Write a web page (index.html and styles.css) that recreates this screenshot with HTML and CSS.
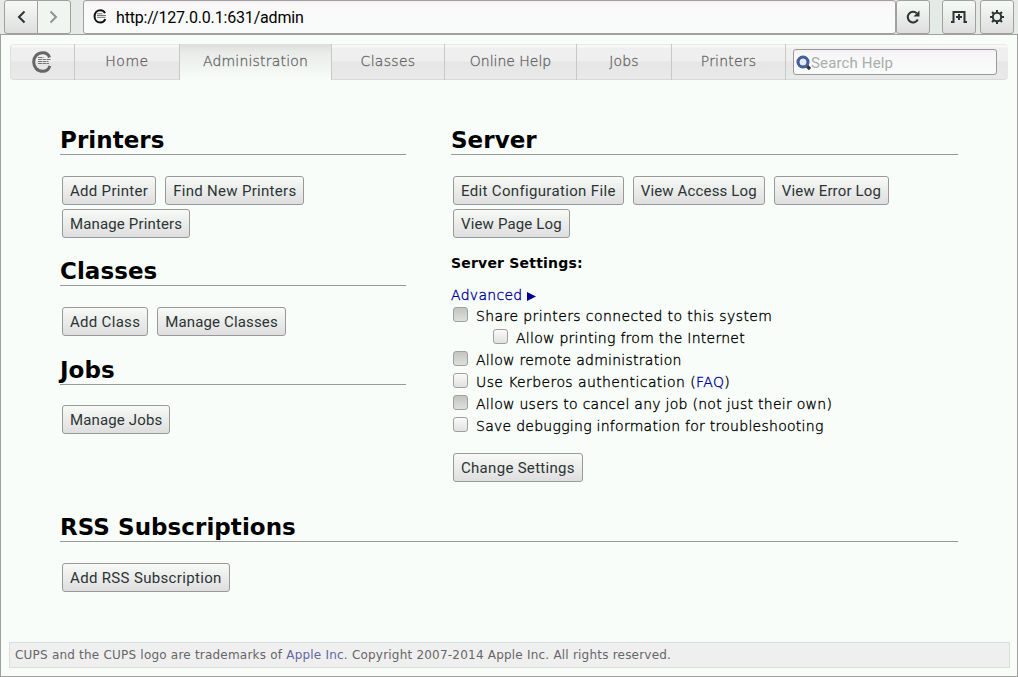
FILE: index.html
```html
<!DOCTYPE html>
<html lang="en">
<head>
    <meta charset="utf-8">
    <title>Administration - CUPS</title>
    <link rel="stylesheet" href="styles.css">
</head>
<body>
    <div class="toolbar">
        <button class="tool back" title="Back"><svg width="16" height="16" viewBox="0 0 16 16"><path d="M11.500 2.500L6 8l5.500 5.500" /></svg></button>
        <button class="tool forward" title="Forward"><svg width="16" height="16" viewBox="0 0 16 16"><path d="M4.500 2.500L10 8l-5.500 5.500" /></svg></button>
        <div class="address">
            <svg class="favicon" width="14" height="15" viewBox="0 0 14 15"><path d="M12 4.200C11 1.900 9.500 1.200 7.500 1.200 4 1.200 1.600 3.900 1.600 7.500s2.400 6.100 5.900 6.100c2.100 0 3.800-1 4.800-3.400" fill="none" stroke="#111" stroke-width="2" /><path d="M4 4.800h5.500M4 6.500h9M4 8.300h8.500" stroke="#777" stroke-width="1" /></svg>
            <span class="url">http://127.0.0.1:631/admin</span>
        </div>
        <button class="tool reload" title="Reload"><svg width="16" height="16" viewBox="0 0 16 16"><path d="M12.800 10.500A5.300 5.300 0 1 1 11.700 4.200" /><path class="solid" d="M14.500 1.500v6H8.500z" /></svg></button>
        <button class="tool newtab" title="New tab"><svg width="18" height="16" viewBox="0 0 18 16"><path d="M1 13h2.500V3h11v10H17M9 5v6M6 8h6" /></svg></button>
        <button class="tool gear" title="Menu"><svg width="16" height="16" viewBox="0 0 16 16"><circle cx="8" cy="8" r="4.200" /><path d="M8 1v2.500M8 12.500V15M1 8h2.500M12.500 8H15M3 3l1.800 1.800M11.200 11.200L13 13M3 13l1.800-1.800M11.200 4.800L13 3" /></svg></button>
    </div>

    <div class="page">
        <div class="nav">
            <a class="tab logo"><svg width="20" height="22" viewBox="0 0 20 22"><path d="M17.500 6.500C16.500 3 14 1.700 10.800 1.700 5.400 1.700 1.700 5.800 1.700 11s3.700 9.300 9.100 9.300c3.200 0 6-1.700 7-5.500" fill="none" stroke="#666" stroke-width="3" /><path d="M6 6.500h5.500M6 8.500h12.500M6 10.500h10.500M6 12.500h11" stroke="#777" stroke-width="1.200" stroke-dasharray="4 .5" /></svg></a>
            <a class="tab home">Home</a>
            <a class="tab admin active">Administration</a>
            <a class="tab classes">Classes</a>
            <a class="tab help">Online Help</a>
            <a class="tab jobs">Jobs</a>
            <a class="tab printers">Printers</a>
            <div class="search">
                <svg width="15" height="16" viewBox="0 0 15 16"><path d="M10.500 10.500l3.500 3.500" stroke="#333" stroke-width="3.200" /><circle cx="7" cy="7" r="5" fill="#e4eaf5" stroke="#35508f" stroke-width="3" /><circle cx="7" cy="7" r="5.300" fill="none" stroke="#6482b9" stroke-width=".6" /></svg>
                <span>Search Help</span>
            </div>
        </div>

        <div class="content">
            <div class="left">
                <h2>Printers</h2>
                <div class="buttons"><button class="wide">Add Printer</button><button class="wide">Find New Printers</button><button>Manage Printers</button></div>
                <h2>Classes</h2>
                <div class="buttons"><button class="wide">Add Class</button><button>Manage Classes</button></div>
                <h2 class="jobs-title">Jobs</h2>
                <div class="buttons"><button>Manage Jobs</button></div>
            </div>
            <div class="right">
                <h2>Server</h2>
                <div class="buttons"><button class="wider">Edit Configuration File</button><button>View Access Log</button><button>View Error Log</button><button>View Page Log</button></div>
                <p class="settings-title">Server Settings:</p>
                <div class="advanced"><a>Advanced <svg width="9" height="9" viewBox="0 0 9 9"><path d="M0 0l9 4.500-9 4.500z" fill="#009" /></svg></a></div>
                <label class="check"><i class="box on"></i><span class="wider">Share printers connected to this system</span></label>
                <label class="check indent"><i class="box"></i><span>Allow printing from the Internet</span></label>
                <label class="check"><i class="box on"></i><span>Allow remote administration</span></label>
                <label class="check"><i class="box"></i><span class="wider">Use Kerberos authentication (<a>FAQ</a>)</span></label>
                <label class="check"><i class="box on"></i><span>Allow users to cancel any job (not just their own)</span></label>
                <label class="check"><i class="box"></i><span>Save debugging information for troubleshooting</span></label>
                <div class="buttons change"><button class="wide">Change Settings</button></div>
            </div>
            <div class="rss">
                <h2>RSS Subscriptions</h2>
                <div class="buttons"><button class="wider">Add RSS Subscription</button></div>
            </div>
        </div>

        <div class="footer">CUPS and the CUPS logo are trademarks of <a>Apple Inc</a>. Copyright 2007-2014 Apple Inc. All rights reserved.</div>
    </div>
</body>
</html>
```
FILE: styles.css
```css
* {
    box-sizing: border-box;
}

body {
    margin: 0;
    height: 677px;
    display: flex;
    flex-direction: column;
    overflow: hidden;
    background: #e6eae6;
    color: #000;
    font-family: "DejaVu Sans", sans-serif;
    font-size: 14px;
}

/* browser toolbar */
.toolbar {
    display: flex;
    height: 34px;
    padding-left: 4px;
}

.tool {
    display: flex;
    align-items: center;
    justify-content: center;
    width: 34px;
    height: 34px;
    margin: 0;
    padding: 0;
    border: 1px solid #a0a0a0;
    border-radius: 3px;
    background: linear-gradient(#f6faf6, #dedede);
}

.tool path,
.tool circle {
    fill: none;
    stroke: #2a3434;
    stroke-width: 2;
}

.tool .solid {
    fill: #2a3434;
    stroke: none;
}

.back {
    border-radius: 3px 0 0 3px;
}

.forward {
    margin-left: -1px;
    border-radius: 0 3px 3px 0;
    background: #f0f5f0;
}

.forward path {
    stroke: #8a9696;
}

.address {
    display: flex;
    align-items: center;
    width: 813px;
    margin-left: 12px;
    padding-left: 9px;
    border: 1px solid #a0a0a0;
    border-radius: 3px;
    background: linear-gradient(#f4eff1, #faf8fa 3px, #f8fcf9);
}

.favicon {
    margin-top: -1px;
}

.url {
    margin-left: 9px;
    font: 16px Roboto, sans-serif;
    letter-spacing: -.17px;
}

.newtab {
    margin-left: 12px;
}

.gear {
    margin-left: 4px;
}

.page {
    display: flex;
    flex-direction: column;
    height: 643px;
    padding: 9px 7px 8px 8px;
    border: 1px solid #a0a0a0;
    background: #f8fdf9;
}

/* CUPS menu bar */
.nav {
    display: flex;
    height: 36px;
    width: 998px;
    margin-left: 1px;
    border: 1px solid #d8dcd8;
    border-top-color: #e8ebe8;
    border-width: 1px 0;
    border-left: 1px solid #dde0dd;
    border-radius: 4px;
    background: linear-gradient(#f8f8f8 0, #f8f8f8 2px, #efefef 3px, #efefef 16px, #e6e6e6 17px, #e9e9e9);
}

.tab {
    height: 36px;
    margin-top: -1px;
    padding-top: 8px;
    border-right: 1px solid #c6cac6;
    color: #666;
    font-size: 14px;
    font-weight: 200;
    -webkit-text-stroke: .3px;
    letter-spacing: .2px;
    line-height: 18px;
    text-align: center;
    white-space: nowrap;
}

.logo {
    width: 64px;
    padding: 7px 2px 0 0;
}

.home {
    width: 105px;
    letter-spacing: .5px;
}

.admin {
    width: 152px;
}

.classes {
    width: 113px;
    letter-spacing: .3px;
}

.help {
    width: 132px;
    letter-spacing: 0;
}

.jobs {
    width: 95px;
}

.printers {
    width: 114px;
}

.active {
    background: linear-gradient(#dcdedc, #e9ebe9 8px, #f8fdf9);
}

.search {
    display: flex;
    align-items: center;
    width: 204px;
    height: 26px;
    margin: 4px 0 0 7px;
    padding: 1px 0 0 2px;
    border: 1px solid #999;
    border-radius: 3px;
    background: linear-gradient(#f3edf0, #f8f6f8 4px, #f8fcf9);
    color: #a9aeaa;
    font: 15px Roboto, sans-serif;
    letter-spacing: .15px;
}

/* admin page */
.content {
    display: grid;
    grid-template-columns: 346px 507px;
    column-gap: 45px;
    margin: 46px 0 0 51px;
}

.rss {
    grid-column: 1 / 3;
    margin-top: 29px;
}

h2 {
    height: 29px;
    margin: 0 0 19px;
    border-bottom: 1px solid #999;
    font-size: 23px;
    letter-spacing: .05px;
    line-height: 28px;
    white-space: nowrap;
}

.jobs-title {
    margin: 18px 0;
}

.buttons {
    display: flex;
    flex-wrap: wrap;
    margin-bottom: 17px;
}

.buttons button {
    height: 29px;
    margin: 2px 7px 2px 2px;
    padding: 0 7px;
    border: 1px solid #999;
    border-radius: 3px;
    background: linear-gradient(#f7faf7, #dedede);
    color: #2c3434;
    font: 15px Roboto, sans-serif;
    letter-spacing: .15px;
    white-space: nowrap;
}

.buttons .wide {
    letter-spacing: .3px;
}

.buttons .wider {
    letter-spacing: .34px;
}

.right .buttons {
    margin-bottom: 14px;
}

.settings-title {
    margin: 0 0 14px;
    font-weight: bold;
    letter-spacing: .2px;
    line-height: 18px;
}

.advanced {
    height: 19px;
    font-weight: 200;
    -webkit-text-stroke: .35px;
    letter-spacing: .3px;
    line-height: 18px;
}

.advanced svg {
    vertical-align: -1px;
}

.right a {
    color: #009;
}

.check {
    display: flex;
    align-items: center;
    height: 22px;
    padding-left: 2px;
    font-weight: 200;
    -webkit-text-stroke: .35px;
    letter-spacing: .27px;
    white-space: nowrap;
}

.check .wider {
    letter-spacing: .4px;
}

.indent {
    padding-left: 42px;
}

.box {
    width: 15px;
    height: 15px;
    margin: -4px 8px 0 0;
    border: 1px solid #a0a0a0;
    border-radius: 3px;
    background: linear-gradient(#fafafa, #e0e0e0);
}

.on {
    background: linear-gradient(#c2c5c0, #dde0db);
}

.right .change {
    margin: 14px 0 0;
}

.footer {
    width: 1001px;
    height: 26px;
    margin-top: auto;
    padding-left: 5px;
    border: 1px solid #ddd;
    background: #efefef;
    color: #666;
    font-size: 12px;
    letter-spacing: .21px;
    line-height: 24px;
}

.footer a {
    color: #6666a0;
}
```
